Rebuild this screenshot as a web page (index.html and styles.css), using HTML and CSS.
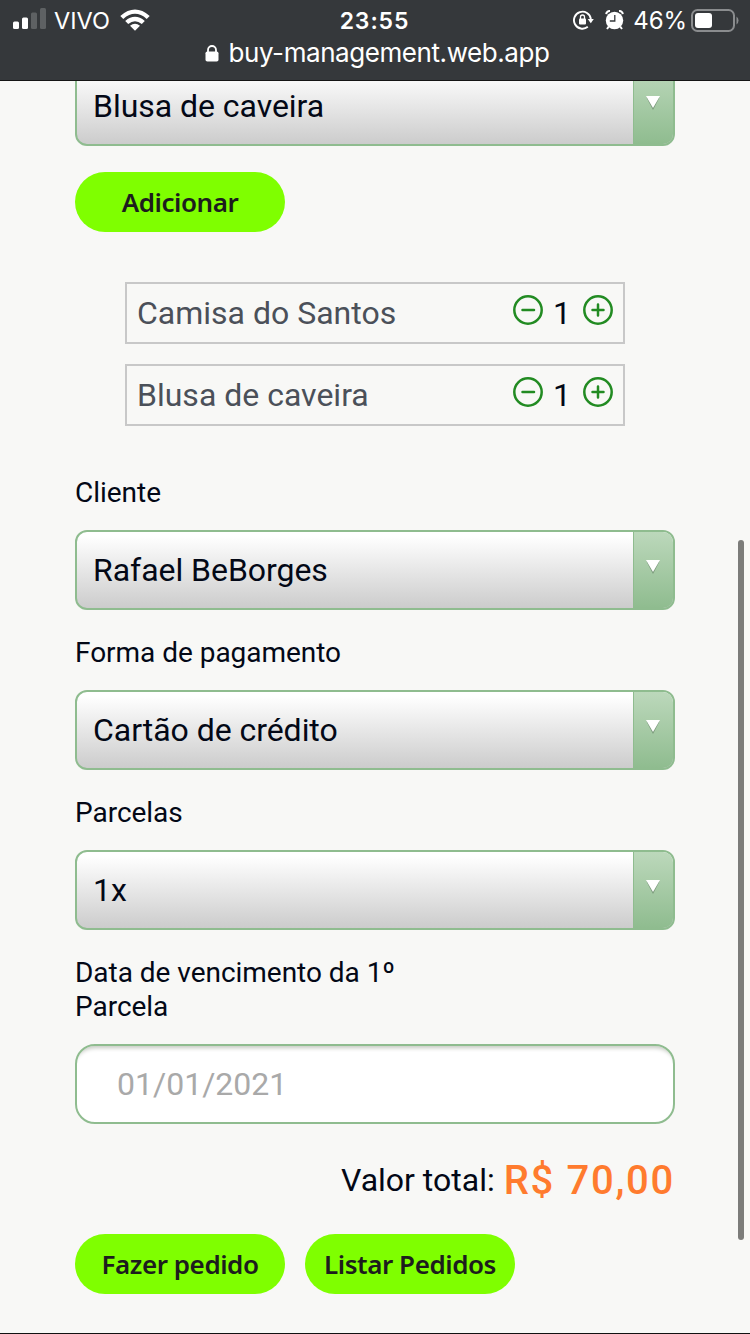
FILE: index.html
```html
<!DOCTYPE html>
<html lang="pt-BR">
<head>
<meta charset="utf-8">
<title>Buy Management</title>
<link rel="stylesheet" href="styles.css">
</head>
<body>
<div class="screen">
  <header class="browser-bar">
    <div class="status">
      <div class="status-left">
        <svg class="signal" width="34" height="22" viewBox="0 0 34 22">
          <rect x="0" y="13.500" width="6" height="7.500" rx="1.500" fill="#fff"/>
          <rect x="9" y="9.500" width="6" height="11.500" rx="1.500" fill="#fff"/>
          <rect x="18" y="4.500" width="6" height="16.500" rx="1.500" fill="#5e6163"/>
          <rect x="27" y="0" width="6" height="21" rx="1.500" fill="#5e6163"/>
        </svg>
        <span class="carrier">VIVO</span>
        <svg class="wifi" width="30" height="22" viewBox="0 0 30 22" fill="#fff">
          <path d="M0.300 6.900Q15-6 29.700 6.900L26.700 9.900Q15-0.300 3.300 9.900Z"/>
          <path d="M5.200 11.900Q15 3.800 24.800 11.900L21.800 14.900Q15 9.500 8.200 14.900Z"/>
          <path d="M10 16.700Q15 12.800 20 16.700L15 21.700Z"/>
        </svg>
      </div>
      <span class="clock">23:55</span>
      <div class="status-right">
        <svg class="rotation" width="21" height="20" viewBox="0 0 21 20">
          <path d="M14.800 16.800A8.500 8.500 0 1 1 17.900 9" fill="none" stroke="#fff" stroke-width="1.900"/>
          <path d="M14.700 9h6.100l-3 4.200z" fill="#fff"/>
          <rect x="6" y="8.600" width="7" height="6" rx="1" fill="#fff"/>
          <path d="M7.500 9V7a2 2 0 0 1 4 0v2" fill="none" stroke="#fff" stroke-width="1.300"/>
        </svg>
        <svg class="alarm" width="19" height="20" viewBox="0 0 19 20">
          <circle cx="9.500" cy="10.500" r="8.700" fill="#fff"/>
          <path d="M1.200 4.200A3.500 3.500 0 0 1 5 1M17.800 4.200A3.500 3.500 0 0 0 14 1M3.800 16.500L2 19M15.200 16.500L17 19" fill="none" stroke="#fff" stroke-width="2"/>
          <path d="M9.800 5v6H4.800" fill="none" stroke="#35383b" stroke-width="1.300"/>
        </svg>
        <span class="percent">46%</span>
        <svg class="battery" width="48" height="23" viewBox="0 0 48 23">
          <rect x="1" y="1" width="42" height="21" rx="5.500" fill="none" stroke="#8a8c8e" stroke-width="2"/>
          <rect x="4" y="4" width="17" height="15" rx="3" fill="#fff"/>
          <path d="M45.500 7.500q2 1.300 2 4t-2 4z" fill="#8a8c8e"/>
        </svg>
      </div>
    </div>
    <div class="address">
      <svg class="lock" width="14" height="17" viewBox="0 0 14 17">
        <rect x="0.500" y="6.500" width="13" height="10" rx="1.800" fill="#fff"/>
        <path d="M3 8V5a4 4 0 0 1 8 0v3" fill="none" stroke="#fff" stroke-width="1.800"/>
      </svg>
      <span class="url">buy-management.web.app</span>
    </div>
  </header>

  <main class="page">
    <form class="order">
      <div class="select"><span class="select-value">Blusa de caveira</span><span class="select-arrow"><svg width="16" height="15" viewBox="0 0 16 15"><path d="M1.500 1.500h13L8 14z" fill="#79977a"/><path d="M1 0h14L8 12z" fill="#fff"/></svg></span></div>
      <button class="btn btn-add" type="button">Adicionar</button>

      <ul class="items">
        <li class="item">
          <span class="item-name">Camisa do Santos</span>
          <span class="counter">
            <svg width="30" height="30" viewBox="0 0 30 30" fill="none" stroke="#228b22"><circle cx="15" cy="15" r="13.700" stroke-width="2.500"/><path d="M9.500 15h11.500" stroke-width="2.500" stroke-linecap="round"/></svg>
            <span class="qty">1</span>
            <svg width="30" height="30" viewBox="0 0 30 30" fill="none" stroke="#228b22"><circle cx="15" cy="15" r="13.700" stroke-width="2.500"/><path d="M9.500 15h11M15 9.500v11" stroke-width="2.500" stroke-linecap="round"/></svg>
          </span>
        </li>
        <li class="item">
          <span class="item-name">Blusa de caveira</span>
          <span class="counter">
            <svg width="30" height="30" viewBox="0 0 30 30" fill="none" stroke="#228b22"><circle cx="15" cy="15" r="13.700" stroke-width="2.500"/><path d="M9.500 15h11.500" stroke-width="2.500" stroke-linecap="round"/></svg>
            <span class="qty">1</span>
            <svg width="30" height="30" viewBox="0 0 30 30" fill="none" stroke="#228b22"><circle cx="15" cy="15" r="13.700" stroke-width="2.500"/><path d="M9.500 15h11M15 9.500v11" stroke-width="2.500" stroke-linecap="round"/></svg>
          </span>
        </li>
      </ul>

      <div class="field">
        <label class="label">Cliente</label>
        <div class="select"><span class="select-value">Rafael BeBorges</span><span class="select-arrow"><svg width="16" height="15" viewBox="0 0 16 15"><path d="M1.500 1.500h13L8 14z" fill="#79977a"/><path d="M1 0h14L8 12z" fill="#fff"/></svg></span></div>
      </div>
      <div class="field">
        <label class="label">Forma de pagamento</label>
        <div class="select"><span class="select-value">Cartão de crédito</span><span class="select-arrow"><svg width="16" height="15" viewBox="0 0 16 15"><path d="M1.500 1.500h13L8 14z" fill="#79977a"/><path d="M1 0h14L8 12z" fill="#fff"/></svg></span></div>
      </div>
      <div class="field">
        <label class="label">Parcelas</label>
        <div class="select"><span class="select-value">1x</span><span class="select-arrow"><svg width="16" height="15" viewBox="0 0 16 15"><path d="M1.500 1.500h13L8 14z" fill="#79977a"/><path d="M1 0h14L8 12z" fill="#fff"/></svg></span></div>
      </div>
      <div class="field">
        <label class="label">Data de vencimento da 1º Parcela</label>
        <div class="date">01/01/2021</div>
      </div>

      <div class="total"><span class="total-label">Valor total:</span><span class="total-value">R$ 70,00</span></div>
      <div class="actions">
        <button class="btn" type="button">Fazer pedido</button>
        <button class="btn" type="button">Listar Pedidos</button>
      </div>
    </form>
    <div class="scrollbar"></div>
  </main>
</div>
</body>
</html>
```
FILE: styles.css
```css
* { box-sizing: border-box; }
body { margin: 0; font-family: Roboto, sans-serif; color: #030816; }
.screen { width: 750px; height: 1334px; display: flex; flex-direction: column; overflow: hidden; background: #f8f8f6; }

.browser-bar { flex: none; height: 81px; background: #35383b; border-bottom: 1px solid #151515; color: #fff; font-family: Inter, sans-serif; }
.status { height: 40px; display: grid; grid-template-columns: 1fr auto 1fr; align-items: center; padding: 0 11px 0 13px; }
.status-left, .status-right { display: flex; align-items: center; }
.status-right { justify-content: flex-end; }
.signal { margin-top: -2px; }
.carrier { margin-left: 7px; font-size: 23.5px; line-height: 30px; padding-top: 2px; letter-spacing: 0; }
.wifi { margin-left: 10px; }
.clock { padding-top: 2px; margin-left: -3px; font-size: 23px; line-height: 30px; font-weight: 600; letter-spacing: 0.9px; }
.percent { font-size: 24px; line-height: 30px; padding-top: 2px; letter-spacing: -0.1px; margin: 0 4px 0 9px; }
.alarm { margin-left: 11px; }
.address { display: flex; justify-content: center; align-items: center; height: 26px; margin-left: 4px; }
.lock { margin-top: 1px; }
.url { margin-left: 10px; font-size: 26px; line-height: 28px; letter-spacing: -0.43px; }

.page { flex: 1; min-height: 0; position: relative; overflow: hidden; border-bottom: 1px solid #111; }
.order { width: 600px; margin: -15px auto 0 75px; }
.select { height: 80px; display: flex; border: 2px solid #8fbc8f; border-radius: 12px; overflow: hidden; background: linear-gradient(#fff 5%, #ccc); }
.select-value { flex: 1; padding-left: 16px; font-size: 32px; line-height: 76px; letter-spacing: -0.04px; }
.select-arrow { width: 40px; border-left: 1px solid #8fbc8f; background: linear-gradient(#bcd8bb, #8fbc8f); display: flex; justify-content: center; padding: 28px 2px 0 0; }
.btn { width: 210px; height: 60px; padding: 0; border: 0; border-radius: 30px; background: #7fff00; color: #1d1d1d; font: 600 26px/60px "Noto Sans", sans-serif; letter-spacing: -0.45px; text-align: center; }
.btn-add { display: block; margin-top: 26px; }

.items { list-style: none; margin: 50px 50px 0; padding: 0; display: grid; gap: 20px; }
.item { height: 62px; border: 2px solid #c8c8c8; padding: 0 10px; display: flex; justify-content: space-between; }
.item-name { font-size: 32px; line-height: 58px; color: #4b5059; }
.counter { display: flex; padding-top: 11px; }
.qty { width: 40px; padding-right: 2px; text-align: center; font-size: 32px; line-height: 36px; }

.field { margin-top: 26px; }
.items + .field { margin-top: 50px; }
.label { display: block; width: 340px; margin-bottom: 20px; font-size: 28px; line-height: 34px; letter-spacing: -0.03px; }
.date { height: 80px; border: 2px solid #8fbc8f; border-radius: 20px; padding-left: 40px; background: #fff; box-shadow: inset 0 7px 4px -5px #c4c8c0; color: #a9a9a9; font-size: 32px; line-height: 76px; }
.total { height: 60px; margin-top: 26px; display: flex; justify-content: flex-end; align-items: center; }
.total-label { font-size: 32px; line-height: 60px; }
.total-value { margin-left: 9px; padding-top: 2px; font-size: 40px; line-height: 60px; font-weight: 500; letter-spacing: 1.7px; color: #ff7b2e; }
.actions { margin-top: 24px; display: flex; gap: 20px; }
.scrollbar { position: absolute; left: 738px; top: 459px; width: 6px; height: 700px; border-radius: 3px; background: #7c7c7a; }
```
